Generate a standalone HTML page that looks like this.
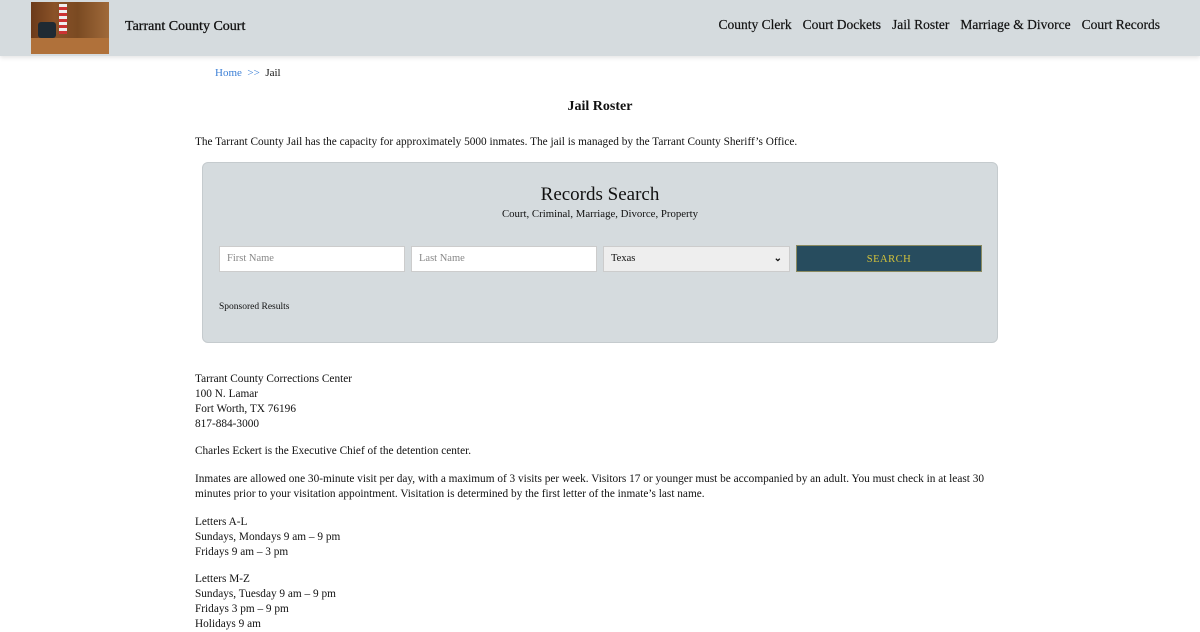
<!DOCTYPE html>
<html><head><meta charset="utf-8"><style>
*{box-sizing:border-box;margin:0;padding:0}
body{width:1200px;height:620px;overflow:hidden;background:#fff;font-family:"Liberation Serif",serif;color:#111;font-size:11.3px}
.hdr{height:56px;background:#d5dbde;position:relative;box-shadow:0 2px 4px rgba(0,0,0,.1)}
.logo{position:absolute;left:31px;top:2px;width:78px;height:52px;background:linear-gradient(90deg,#6b3a1a 0,#8a5228 30%,#7a4a22 60%,#a06a3a 100%)}
.logo .ch{position:absolute;left:7px;top:20px;width:18px;height:16px;background:#1f2a33;border-radius:3px}
.logo .fl{position:absolute;left:28px;top:2px;width:8px;height:30px;background:repeating-linear-gradient(0deg,#c33 0 3px,#eee 3px 6px)}
.logo .dk{position:absolute;left:0;top:36px;width:78px;height:16px;background:#b0713a}
.title{position:absolute;left:125px;top:19px;font-size:14px;font-weight:normal;-webkit-text-stroke:.3px #111}
.nav{position:absolute;right:40px;top:17px;font-size:13.5px;-webkit-text-stroke:.2px #111}
.nav span{margin-left:11px}
.bc{position:absolute;left:215px;top:67px;font-size:11px}
.bc a{color:#3b7fd6}
h1{position:absolute;left:0;width:1200px;text-align:center;top:99px;font-size:14px}
p{position:absolute;left:195px;font-size:11.3px;line-height:15px}
.box{position:absolute;left:202px;top:162px;width:796px;height:181px;background:#d5dbde;border:1px solid #c5cbce;border-radius:6px}
.box .t{position:absolute;width:100%;text-align:center;top:21px;font-size:19px}
.box .s{position:absolute;width:100%;text-align:center;top:45px;font-size:10.8px}
.in{position:absolute;top:83px;height:26px;background:#fff;border:1px solid #ccc;color:#888;font-size:10.5px;padding:6px 7px}
.sel{background:#eee;color:#111}
.btn{position:absolute;left:593px;top:82px;width:186px;height:27px;background:#274c5e;color:#d4c23a;font-size:10.5px;text-align:center;line-height:27px;letter-spacing:.5px;border:1px solid #8a8a60}
.sp{position:absolute;left:16px;top:139px;font-size:9.5px}
</style></head><body>
<div class="hdr"><div class="logo"><div class="dk"></div><div class="ch"></div><div class="fl"></div></div>
<div class="title">Tarrant County Court</div>
<div class="nav"><span>County Clerk</span><span>Court Dockets</span><span>Jail Roster</span><span>Marriage &amp; Divorce</span><span>Court Records</span></div></div>
<div class="bc"><a>Home</a> <span style="color:#3b7fd6">&nbsp;&gt;&gt;</span> &nbsp;Jail</div>
<h1>Jail Roster</h1>
<p style="top:135px">The Tarrant County Jail has the capacity for approximately 5000 inmates. The jail is managed by the Tarrant County Sheriff’s Office.</p>
<div class="box"><div class="t">Records Search</div><div class="s">Court, Criminal, Marriage, Divorce, Property</div>
<div class="in" style="left:16px;width:186px">First Name</div>
<div class="in" style="left:208px;width:186px">Last Name</div>
<div class="in sel" style="left:400px;width:187px">Texas<span style="float:right;font-size:10px;font-weight:bold">⌄</span></div>
<div class="btn">SEARCH</div>
<div class="sp">Sponsored Results</div></div>
<p style="top:372px">Tarrant County Corrections Center<br>100 N. Lamar<br>Fort Worth, TX 76196<br>817-884-3000</p>
<p style="top:444px">Charles Eckert is the Executive Chief of the detention center.</p>
<p style="top:472px;width:800px">Inmates are allowed one 30-minute visit per day, with a maximum of 3 visits per week. Visitors 17 or younger must be accompanied by an adult. You must check in at least 30 minutes prior to your visitation appointment. Visitation is determined by the first letter of the inmate’s last name.</p>
<p style="top:515px">Letters A-L<br>Sundays, Mondays 9 am – 9 pm<br>Fridays 9 am – 3 pm</p>
<p style="top:572px">Letters M-Z<br>Sundays, Tuesday 9 am – 9 pm<br>Fridays 3 pm – 9 pm<br>Holidays 9 am</p>
</body></html>
